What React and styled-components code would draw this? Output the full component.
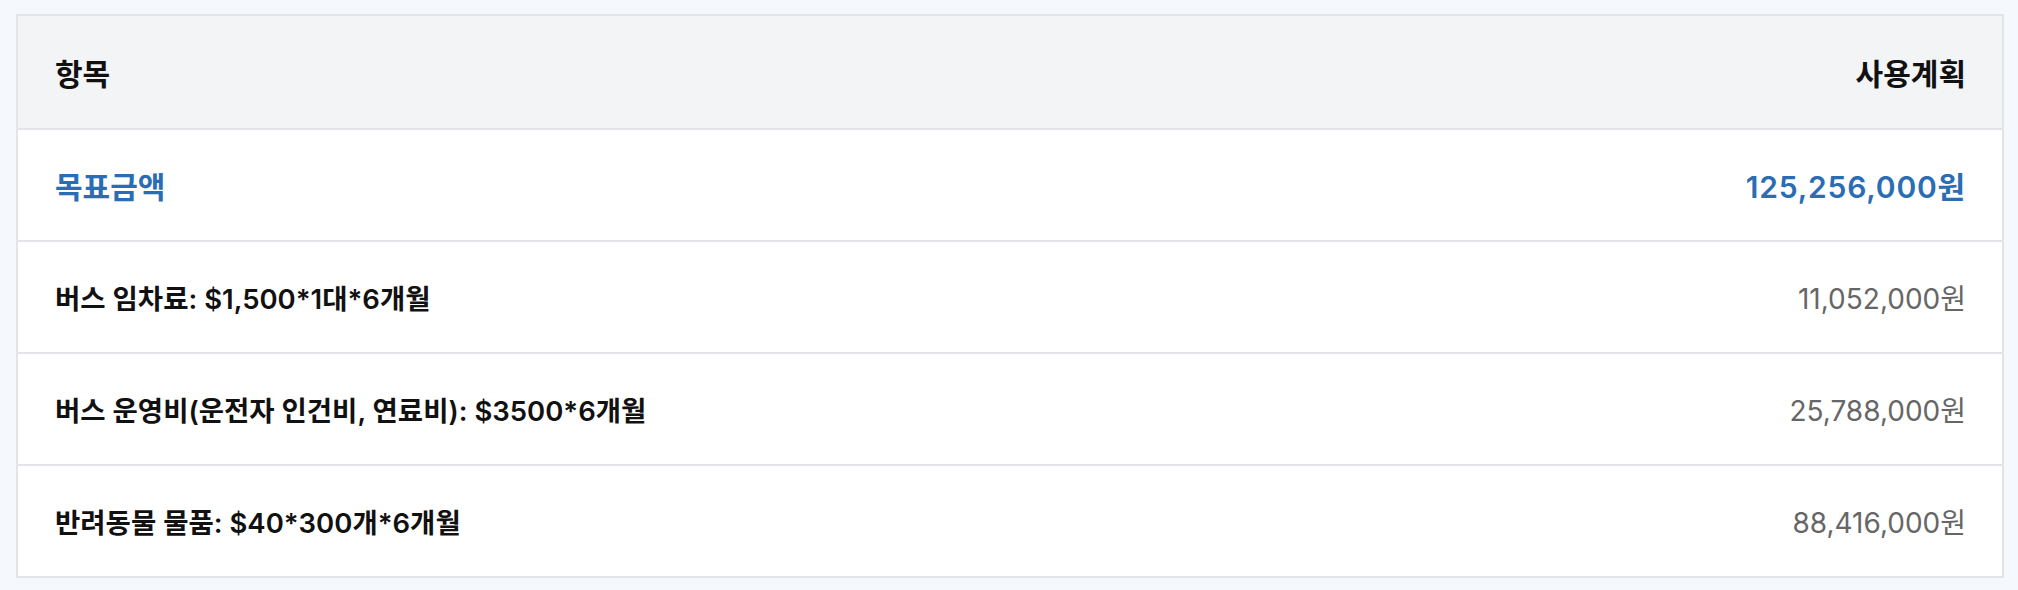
import styled, { createGlobalStyle } from "styled-components";

const GlobalStyle = createGlobalStyle`
    body {
        margin: 0;
        background: #f5f8fc;
        font-family: Inter, "Noto Sans CJK KR", sans-serif;
    }
`

const Page = styled.div`
    padding: 14px 14px 12px 16px;
`

const Table = styled.div`
    background: #fff;
    border: 2px solid #e2e4e7;
`

const Row = styled.div`
    display: flex;
    align-items: center;
    justify-content: space-between;
    height: ${props => props.head ? 112 : 110}px;
    padding: 0 36px 0 37px;
    background: ${props => props.head ? '#f3f4f6' : '#fff'};
    border-top: ${props => props.first ? 'none' : '2px solid #e2e4e7'};
`

const Label = styled.span`
    font-size: ${props => props.size}px;
    font-weight: 600;
    letter-spacing: ${props => props.spacing || 0}px;
    color: ${props => props.color || '#111'};
`

const Amount = styled.span`
    font-size: 28px;
    font-weight: 400;
    color: #666;
`

const items = [
    { name: '버스 임차료: $1,500*1대*6개월', amount: '11,052,000원' },
    { name: '버스 운영비(운전자 인건비, 연료비): $3500*6개월', amount: '25,788,000원' },
    { name: '반려동물 물품: $40*300개*6개월', amount: '88,416,000원' },
]

export default function App() {
    return (
        <>
            <GlobalStyle />
            <Page>
                <Table>
                    <Row head first>
                        <Label size={30}>항목</Label>
                        <Label size={30}>사용계획</Label>
                    </Row>
                    <Row>
                        <Label size={30} color="#2a6db4">목표금액</Label>
                        <Label size={30} spacing={0.8} color="#2a6db4">125,256,000원</Label>
                    </Row>
                    {items.map((item) => (
                        <Row key={item.name}>
                            <Label size={27.5}>{item.name}</Label>
                            <Amount>{item.amount}</Amount>
                        </Row>
                    ))}
                </Table>
            </Page>
        </>
    )
}
